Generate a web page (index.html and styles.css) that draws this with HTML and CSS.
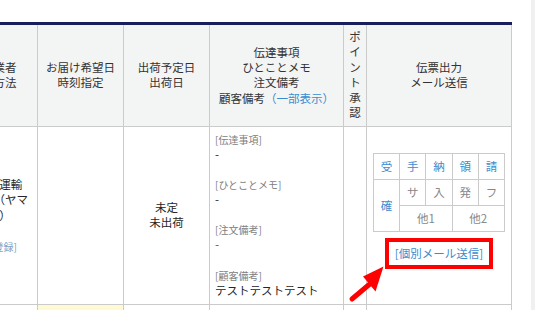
FILE: index.html
```html
<!DOCTYPE html>
<html lang="ja">
<head>
  <meta charset="UTF-8">
  <meta name="viewport" content="width=device-width, initial-scale=1.0">
  <title>受注一覧</title>
  <link rel="stylesheet" href="styles.css">
</head>
<body>
  <div class="page">
    <div class="main">
      <div class="table-wrap">
        <table class="orders">
          <colgroup>
            <col class="col-carrier">
            <col class="col-date">
            <col class="col-ship">
            <col class="col-notes">
            <col class="col-point">
            <col class="col-output">
          </colgroup>
          <thead>
            <tr>
              <th>配送業者<br>配送方法</th>
              <th>お届け希望日<br>時刻指定</th>
              <th>出荷予定日<br>出荷日</th>
              <th>伝達事項<br>ひとことメモ<br>注文備考<br>顧客備考<a class="link" href="#">（一部表示）</a></th>
              <th class="vertical">ポイント承認</th>
              <th>伝票出力<br>メール送信</th>
            </tr>
          </thead>
          <tbody>
            <tr>
              <td class="carrier">
                ヤマト運輸<br>宅急便（ヤマ<br>ト便）
                <a class="small-link" href="#">[伝票登録]</a>
              </td>
              <td></td>
              <td>未定<br>未出荷</td>
              <td class="notes">
                <div class="note">
                  <span class="note-label">[伝達事項]</span>
                  <span class="note-value">-</span>
                </div>
                <div class="note">
                  <span class="note-label">[ひとことメモ]</span>
                  <span class="note-value">-</span>
                </div>
                <div class="note">
                  <span class="note-label">[注文備考]</span>
                  <span class="note-value blue">-</span>
                </div>
                <div class="note">
                  <span class="note-label">[顧客備考]</span>
                  <span class="note-value">テストテストテスト</span>
                </div>
              </td>
              <td></td>
              <td class="output">
                <table class="slips">
                  <tr>
                    <td class="on">受</td>
                    <td class="on">手</td>
                    <td class="on">納</td>
                    <td class="on">領</td>
                    <td class="on">請</td>
                  </tr>
                  <tr>
                    <td class="on" rowspan="2">確</td>
                    <td>サ</td>
                    <td>入</td>
                    <td>発</td>
                    <td>フ</td>
                  </tr>
                  <tr>
                    <td colspan="2">他1</td>
                    <td colspan="2">他2</td>
                  </tr>
                </table>
                <span class="mail-box"><a class="link" href="#">[個別メール送信]</a></span>
              </td>
            </tr>
            <tr class="next-row">
              <td></td>
              <td class="highlight"></td>
              <td></td>
              <td></td>
              <td></td>
              <td></td>
            </tr>
          </tbody>
        </table>
      </div>

      <!-- annotation arrow -->
      <svg class="arrow" width="45" height="45" viewBox="0 0 45 45">
        <line x1="7" y1="39" x2="26" y2="23" stroke="#ff0000" stroke-width="5" stroke-linecap="round"/>
        <polygon points="38.5,6.5 18,16.5 30.5,31.5" fill="#ff0000"/>
      </svg>
    </div>
    <div class="scrollbar"></div>
  </div>
</body>
</html>
```

FILE: styles.css
```css
body {
  margin: 0;
  font-family: "Noto Sans CJK JP", "Noto Sans", sans-serif;
  font-size: 11.5px;
  line-height: 15.3px;
  color: #262626;
  background: #fff;
}
a {
  text-decoration: none;
}
.page {
  display: flex;
  height: 310px;
  overflow: hidden;
}
.main {
  flex: 1;
  position: relative;
  overflow: hidden;
  padding-top: 22px;
}
.scrollbar {
  width: 4px;
  background: #f0f0f0;
}
.orders {
  border-collapse: collapse;
  table-layout: fixed;
  width: 562px;
  margin-left: -51px;
}
.col-carrier { width: 88px; }
.col-date { width: 86px; }
.col-ship { width: 86px; }
.col-notes { width: 134px; }
.col-point { width: 23px; }
.col-output { width: 145px; }
.orders th,
.orders td {
  border: 1px solid #cbcbcb;
  text-align: center;
  vertical-align: middle;
  padding: 4px 5px;
}
.orders th {
  background: #f3f4f4;
  color: #333;
  font-weight: normal;
  border-top: 3px solid #1c1d5c;
}
.orders th.vertical {
  padding: 4px 5px 5px;
}
.link {
  color: #3b8ccf;
}
.carrier .small-link {
  display: block;
  margin-top: 17px;
  font-size: 10px;
  line-height: 14px;
  color: #7f9fc4;
}
.notes {
  text-align: left !important;
  padding: 6px 5px !important;
}
.note + .note {
  margin-top: 16px;
}
.note-label {
  display: block;
  font-size: 10px;
  line-height: 14px;
  color: #808080;
}
.note-value {
  display: block;
}
.note-value.blue {
  color: #2f4fd6;
}
.output {
  vertical-align: top !important;
  padding-top: 26px !important;
}
.slips {
  border-collapse: collapse;
  table-layout: fixed;
  width: 132px;
  margin: 0 auto;
}
.orders .slips td {
  border: 1px solid #cbcbcb;
  height: 25px;
  padding: 0;
  color: #888;
}
.orders .slips td.on {
  color: #3b8ccf;
}
.mail-box {
  display: inline-block;
  margin-top: 6px;
  padding: 4px 6px;
  border: 4px solid #ff0000;
}
.next-row td {
  height: 30px;
}
.orders td.highlight {
  background: #fffad2;
}
.arrow {
  position: absolute;
  left: 345px;
  top: 260px;
}
```
